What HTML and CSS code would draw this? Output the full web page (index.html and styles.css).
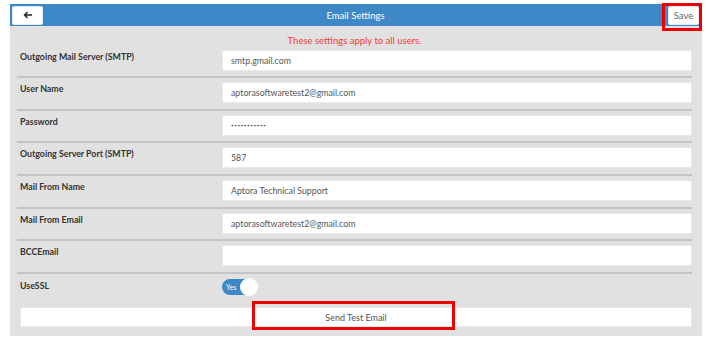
FILE: index.html
```html
<!DOCTYPE html>
<html lang="en">
<head>
    <meta charset="UTF-8">
    <title>Email Settings</title>
    <link rel="stylesheet" href="styles.css">
</head>
<body>

    <div class="page">
        <!-- Header bar -->
        <div class="header">
            <button class="back-button">
                <svg width="10" height="8" viewBox="0 0 10 8"><path d="M9 4H1.5M4.5 1L1.5 4l3 3" fill="none" stroke="#222" stroke-width="1.4"/></svg>
            </button>
            <div class="header-title">Email Settings</div>
            <div class="save-wrap">
                <button class="save-button">Save</button>
            </div>
        </div>

        <!-- Settings -->
        <div class="panel">
            <div class="notice">These settings apply to all users.</div>

            <div class="row first">
                <label>Outgoing Mail Server (SMTP)</label>
                <input type="text" value="smtp.gmail.com">
            </div>
            <div class="row">
                <label>User Name</label>
                <input type="text" value="aptorasoftwaretest2@gmail.com">
            </div>
            <div class="row">
                <label>Password</label>
                <input class="secret" type="password" value="password123">
            </div>
            <div class="row">
                <label>Outgoing Server Port (SMTP)</label>
                <input type="text" value="587">
            </div>
            <div class="row">
                <label>Mail From Name</label>
                <input type="text" value="Aptora Technical Support">
            </div>
            <div class="row">
                <label>Mail From Email</label>
                <input type="text" value="aptorasoftwaretest2@gmail.com">
            </div>
            <div class="row">
                <label>BCCEmail</label>
                <input type="text" value="">
            </div>
            <div class="row last">
                <label>UseSSL</label>
                <div class="toggle">
                    <span class="toggle-text">Yes</span>
                    <span class="toggle-knob"></span>
                </div>
            </div>

            <div class="test-wrap">
                <button class="test-button">Send Test Email</button>
                <span class="test-mark"></span>
            </div>
        </div>
    </div>

</body>
</html>
```

FILE: styles.css
```css
/* Base styling */
body {
    margin: 0;
    background: #fff;
    font-family: 'Lato', 'Open Sans', sans-serif;
    font-size: 9.5px;
    color: #333;
}

.page {
    width: 692px;
    margin: 4px 0 0 10px;
}

/* Header bar */
.header {
    height: 22px;
    background: #3e88c8;
    display: flex;
    align-items: center;
    padding: 0 3px 0 2px;
}

.back-button {
    width: 31px;
    height: 19px;
    background: #fff;
    border: 1px dotted #c8d8e8;
    border-radius: 2px;
    padding: 0;
    display: flex;
    align-items: center;
    justify-content: center;
}

.header-title {
    flex: 1;
    text-align: center;
    color: #fff;
    font-size: 9.5px;
}

.save-wrap {
    position: relative;
}

.save-wrap::after {
    content: "";
    position: absolute;
    left: -6px;
    right: -3px;
    top: -3px;
    bottom: -6px;
    border: 3px solid #ee0000;
}

.save-button {
    width: 31px;
    height: 19px;
    background: #fff;
    border: 1px dotted #c8d8e8;
    border-radius: 2px;
    padding: 0;
    font-family: inherit;
    font-size: 9.5px;
    color: #666;
}

/* Panel */
.panel {
    background: #e1e1e1;
    padding: 0 10px 9px 7px;
}

.notice {
    color: #f03c3c;
    text-align: center;
    height: 20px;
    line-height: 30px;
}

.row {
    display: flex;
    align-items: flex-start;
    height: 26.7px;
    padding-top: 4px;
    border-bottom: 2px solid #c4c4c4;
}

.row.first {
    height: 26px;
    padding-top: 4px;
}

.row label {
    width: 202px;
    padding: 1px 0 0 3px;
    font-weight: 700;
    font-size: 8.8px;
    color: #333;
}

.row input {
    flex: 1;
    height: 21px;
    box-sizing: border-box;
    border: 1px dotted #d4d4d4;
    border-radius: 2px;
    background: #fff;
    padding: 0 8px;
    font-family: inherit;
    font-size: 8.8px;
    color: #555;
    outline: none;
}

.row input.secret {
    font-size: 4.5px;
    letter-spacing: 0.6px;
    color: #444;
}

.row.last {
    border-bottom: none;
    height: 28px;
    padding-top: 5px;
}

/* Toggle */
.toggle {
    width: 35px;
    height: 16px;
    border-radius: 8px;
    background: #3e88c8;
    position: relative;
    display: flex;
    align-items: center;
}

.toggle-text {
    color: #fff;
    font-size: 7px;
    padding-left: 4px;
}

.toggle-knob {
    position: absolute;
    right: -1px;
    top: -1px;
    width: 18px;
    height: 18px;
    border-radius: 50%;
    background: #fff;
}

/* Send test */
.test-wrap {
    position: relative;
    margin-left: 3px;
}

.test-button {
    width: 100%;
    height: 20px;
    background: #fff;
    border: 1px dotted #d4d4d4;
    border-radius: 2px;
    font-family: inherit;
    font-size: 9px;
    color: #555;
}

.test-mark {
    position: absolute;
    left: 232px;
    width: 197px;
    top: -6px;
    height: 23px;
    border: 3px solid #ee0000;
}
```
